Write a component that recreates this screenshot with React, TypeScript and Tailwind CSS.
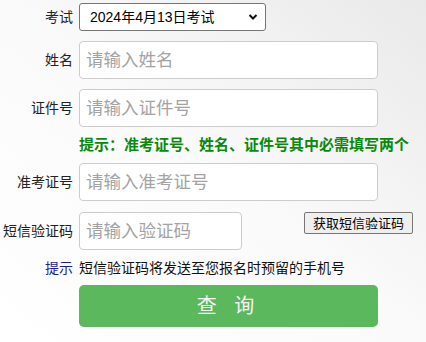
const font = "font-['Arial','Noto_Sans_CJK_SC',sans-serif]";

function Row({ label, children, className = "" }: { label: string; children: React.ReactNode; className?: string }) {
  return (
    <div className={`flex items-center ${className}`}>
      <label className="w-[73px] shrink-0 text-right text-[14px] text-[#222] leading-none">{label}</label>
      <div className="ml-[6px] flex items-start">{children}</div>
    </div>
  );
}

function TextInput({ placeholder, width }: { placeholder: string; width: string }) {
  return (
    <input
      type="text"
      placeholder={placeholder}
      className={`${width} h-[38px] rounded-[4px] border border-[#cccccc] bg-white px-[6px] text-[17.5px] text-[#333] placeholder:text-[#a3a3a3] outline-none`}
    />
  );
}

export default function App() {
  return (
    <div className={`${font} w-[426px] h-[342px] overflow-hidden bg-gradient-to-bl from-[#e9e9e9] via-[#fafafa] to-white`}>
      <div className="pt-[3px] flex flex-col">
        <Row label="考试">
          <div className="relative">
            <select className="w-[187px] h-[28px] appearance-none rounded-[3px] border border-[#767676] bg-white pl-[10px] text-[14px] text-black outline-none">
              <option>2024年4月13日考试</option>
            </select>
            <svg className="pointer-events-none absolute right-[8px] top-[10px]" width="10" height="8" viewBox="0 0 10 8">
              <path d="M1.5 2 L5 5.5 L8.5 2" fill="none" stroke="#111" strokeWidth="2" />
            </svg>
          </div>
        </Row>

        <Row label="姓名" className="mt-[10px]">
          <TextInput placeholder="请输入姓名" width="w-[299px]" />
        </Row>

        <Row label="证件号" className="mt-[10px]">
          <TextInput placeholder="请输入证件号" width="w-[299px]" />
        </Row>

        <p className="mt-[10px] ml-[79px] h-[16px] text-[15px] leading-[16px] font-bold text-[#0a8a0a] whitespace-nowrap">
          提示：准考证号、姓名、证件号其中必需填写两个
        </p>

        <Row label="准考证号" className="mt-[10px]">
          <TextInput placeholder="请输入准考证号" width="w-[299px]" />
        </Row>

        <div className="mt-[11px] flex items-start">
          <div className="flex items-center h-[37px]">
            <label className="w-[73px] shrink-0 text-right text-[14px] text-[#222] leading-none">短信验证码</label>
          </div>
          <div className="ml-[6px]">
            <TextInput placeholder="请输入验证码" width="w-[163px]" />
          </div>
          <button className="ml-[62px] h-[22px] w-[109px] rounded-[2px] border border-[#767676] bg-[#efefef] text-[13px] leading-none text-black whitespace-nowrap">
            获取短信验证码
          </button>
        </div>

        <div className="mt-[10px] flex items-center h-[16px] text-[14px] leading-none whitespace-nowrap">
          <span className="ml-[45px] text-[#1a1aa6]">提示</span>
          <span className="ml-[6px] text-[#111]">短信验证码将发送至您报名时预留的手机号</span>
        </div>

        <div className="mt-[9px] ml-[79px]">
          <button className="w-[299px] h-[42px] rounded-[5px] bg-[#5cb85c] text-[20px] text-[#f4f4f4] tracking-[6px]">
            查 询
          </button>
        </div>
      </div>
    </div>
  );
}
